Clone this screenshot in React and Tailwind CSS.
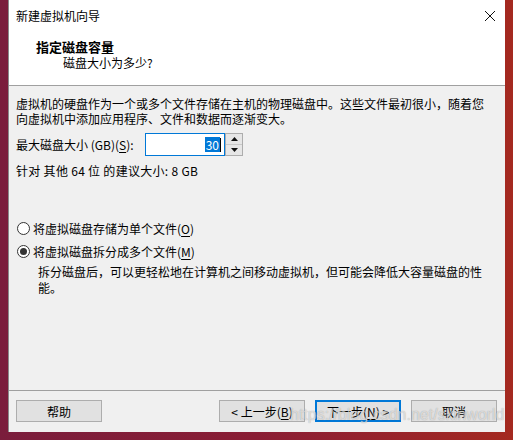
import React, { useState } from 'react';

const font = { fontFamily: '"Noto Sans CJK SC", "Noto Sans", sans-serif' };

function Key({ k }) {
  return (
    <>
      (<span className="underline underline-offset-2">{k}</span>)
    </>
  );
}

function Radio({ checked, label, onClick }) {
  return (
    <div className="flex items-center h-[18px] cursor-default" onClick={onClick}>
      <span className="w-[13px] h-[13px] rounded-full border border-[#333] bg-white flex items-center justify-center ml-[1px]">
        {checked && <span className="w-[7px] h-[7px] rounded-full bg-[#333]" />}
      </span>
      <span className="ml-[3px]">{label}</span>
    </div>
  );
}

function Button({ children, primary }) {
  return (
    <button
      className={
        'w-[86px] h-[22px] bg-[#e1e1e1] text-[12px] text-black flex items-center justify-center ' +
        (primary ? 'border-2 border-[#0078d7]' : 'border border-[#adadad]')
      }
    >
      {children}
    </button>
  );
}

export default function App() {
  const [split, setSplit] = useState(true);

  return (
    <div
      className="relative w-[513px] h-[440px] overflow-hidden bg-gradient-to-r from-[#7a1d3c] via-[#8a1d34] to-[#a4291f] pl-[8px]"
      style={font}
    >
      <div className="w-[497px] h-[432px] bg-[#f0f0f0] flex flex-col text-[12px] text-black leading-[15px] border-l border-[#8a8a8a]">
        {/* title bar */}
        <div className="h-[30px] bg-white flex items-center justify-between pl-[7px] pr-[9px]">
          <span className="text-[12px]">新建虚拟机向导</span>
          <svg width="12" height="12" viewBox="0 0 12 12" className="mt-[1px]">
            <path d="M1 1 L11 11 M11 1 L1 11" stroke="#111" strokeWidth="1" />
          </svg>
        </div>

        {/* header */}
        <div className="h-[56px] bg-white border-b border-[#a0a0a0] pt-[9px]">
          <div className="pl-[27px] font-bold text-[13px] leading-[16px]">指定磁盘容量</div>
          <div className="pl-[54px] leading-[15px]">磁盘大小为多少?</div>
        </div>

        {/* body */}
        <div className="h-[305px] px-[7px] pt-[10px] border-b border-[#a0a0a0]">
          <p>
            虚拟机的硬盘作为一个或多个文件存储在主机的物理磁盘中。这些文件最初很小，随着您
            <br />
            向虚拟机中添加应用程序、文件和数据而逐渐变大。
          </p>

          <div className="flex items-center mt-[7px] h-[23px]">
            <span className="w-[129px] shrink-0 whitespace-nowrap">
              最大磁盘大小 (GB)<Key k="S" />:
            </span>
            <div className="shrink-0 w-[80px] h-[23px] bg-white border border-[#0078d7] flex items-center justify-end pr-[3px]">
              <span className="bg-[#0078d7] text-white px-[1px] leading-[15px]">30</span>
              <span className="w-px h-[14px] bg-black" />
            </div>
            <div className="shrink-0 w-[18px] h-[23px] border border-[#adadad] bg-[#f0f0f0] flex flex-col">
              <div className="flex-1 flex items-center justify-center border-b border-[#c8c8c8] bg-[#e6e6e6]">
                <svg width="7" height="4" viewBox="0 0 7 4">
                  <path d="M0 4 L3.5 0 L7 4 Z" fill="#111" />
                </svg>
              </div>
              <div className="flex-1 flex items-center justify-center bg-[#e6e6e6]">
                <svg width="7" height="4" viewBox="0 0 7 4">
                  <path d="M0 0 L3.5 4 L7 0 Z" fill="#111" />
                </svg>
              </div>
            </div>
          </div>

          <div className="mt-[7px] tracking-[0.3px]">针对 其他 64 位 的建议大小: 8 GB</div>

          <div className="mt-[41px] flex flex-col gap-[5px]">
            <Radio
              checked={!split}
              onClick={() => setSplit(false)}
              label={<>将虚拟磁盘存储为单个文件<Key k="O" /></>}
            />
            <Radio
              checked={split}
              onClick={() => setSplit(true)}
              label={<>将虚拟磁盘拆分成多个文件<Key k="M" /></>}
            />
          </div>
          <p className="pl-[22px] mt-[4px] leading-[16px]">
            拆分磁盘后，可以更轻松地在计算机之间移动虚拟机，但可能会降低大容量磁盘的性
            <br />
            能。
          </p>
        </div>

        {/* footer */}
        <div className="flex items-center pt-[9px] pl-[7px]">
          <Button>帮助</Button>
          <div className="ml-auto flex gap-[10px] pr-[8px]">
            <Button>&lt; 上一步<Key k="B" /></Button>
            <Button primary>下一步<Key k="N" /> &gt;</Button>
            <Button>取消</Button>
          </div>
        </div>
      </div>

      {/* watermark */}
      <div
        className="absolute left-[290px] top-[405px] text-[16px] leading-[20px] whitespace-nowrap text-white/60 pointer-events-none [text-shadow:0_0_1px_rgba(0,0,0,0.35)]"
        style={{ fontFamily: '"Liberation Sans", Arial, sans-serif' }}
      >
        https://blog.csdn.net/skinworld
      </div>
    </div>
  );
}
